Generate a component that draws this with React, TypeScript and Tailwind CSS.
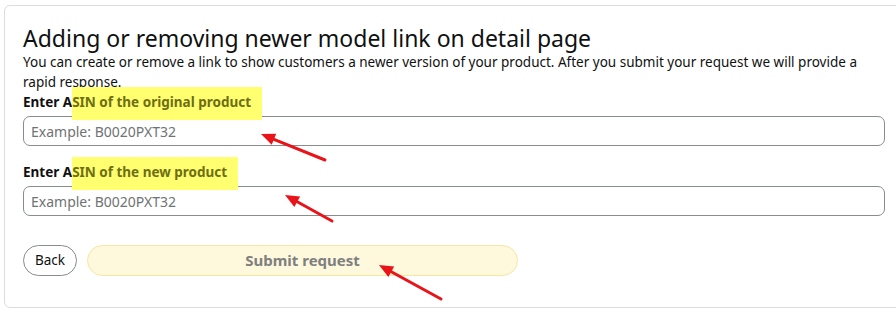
import React from 'react';

const Arrow = ({ x1, y1, x2, y2 }: { x1: number; y1: number; x2: number; y2: number }) => {
  const a = Math.atan2(y2 - y1, x2 - x1);
  const len = 14;
  const w = 6;
  const bx = x2 - len * Math.cos(a);
  const by = y2 - len * Math.sin(a);
  const p1 = `${bx + w * Math.sin(a)},${by - w * Math.cos(a)}`;
  const p2 = `${bx - w * Math.sin(a)},${by + w * Math.cos(a)}`;
  return (
    <g>
      <line x1={x1} y1={y1} x2={bx} y2={by} stroke="#e8141a" strokeWidth={3} strokeLinecap="round" />
      <polygon points={`${x2},${y2} ${p1} ${p2}`} fill="#e8141a" />
    </g>
  );
};

const Label = ({ rest }: { rest: string }) => (
  <label className="block text-[13.5px] leading-[20px] font-bold text-[#0f1111]">
    Enter A<span className="bg-[#ffff70] text-[#6e6e14] pt-[6px] pb-[9px] pr-[11px]">{rest}</span>
  </label>
);

const Field = () => (
  <input
    placeholder="Example: B0020PXT32"
    className="block w-full h-[30px] mt-[4px] px-[7px] rounded-[7px] border border-[#888c8c] text-[14px] text-[#0f1111] placeholder:text-[#6f7373] outline-none"
  />
);

export default function App() {
  return (
    <div className="relative w-[896px] h-[310px] overflow-hidden bg-white font-['Noto_Sans',sans-serif]">
      <div className="ml-[4px] mt-[5px] w-[900px] h-[303px] rounded-[6px] border border-[#dddddd] px-[18px] pt-[18px]">
        <h1 className="text-[23px] leading-[28px] text-[#0f1111]">Adding or removing newer model link on detail page</h1>
        <p className="text-[13.5px] leading-[20px] text-[#0f1111]">
          You can create or remove a link to show customers a newer version of your product. After you submit your request we will provide a rapid response.
        </p>
        <div>
          <Label rest="SIN of the original product" />
          <Field />
        </div>
        <div className="mt-[16px]">
          <Label rest="SIN of the new product" />
          <Field />
        </div>
        <div className="flex gap-[10px] mt-[29px]">
          <button className="h-[31px] px-[11px] rounded-full border border-[#888c8c] text-[13.5px] text-[#0f1111]">Back</button>
          <button className="h-[31px] w-[431px] rounded-full border border-[#f6e6a4] bg-[#fef8dd] text-[15px] font-bold text-[#7f7f7f]">Submit request</button>
        </div>
      </div>
      <svg className="absolute inset-0 pointer-events-none" width={896} height={310}>
        <Arrow x1={325} y1={160} x2={261} y2={134} />
        <Arrow x1={332} y1={221} x2={285} y2={195} />
        <Arrow x1={441} y1={299} x2={379} y2={265} />
      </svg>
    </div>
  );
}
